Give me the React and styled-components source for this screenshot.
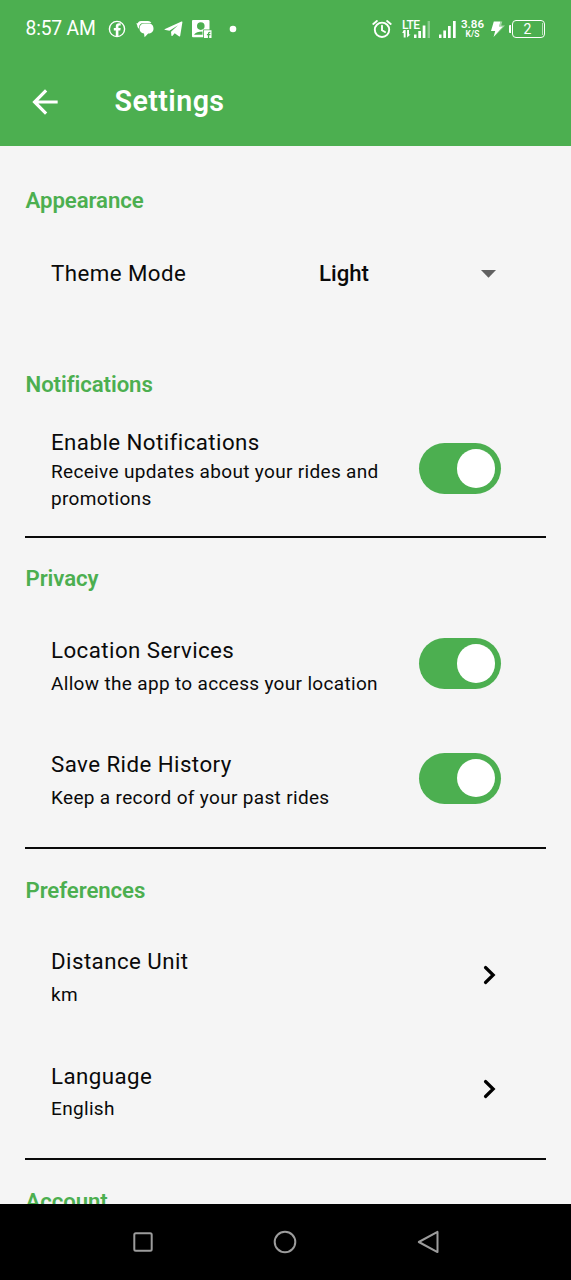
import React from "react";
import styled, { createGlobalStyle } from "styled-components";

const GREEN = "#4caf50";

const GlobalStyle = createGlobalStyle`
  * { box-sizing: border-box; }
  body { margin: 0; background: #f5f5f5; }
`;

const Screen = styled.div`
  display: flex;
  flex-direction: column;
  width: 100%;
  height: 1280px;
  overflow: hidden;
  background: #f5f5f5;
  color: #0a0a0a;
  font-family: Roboto, "Liberation Sans", sans-serif;
`;

const Header = styled.header`
  flex: none;
  height: 146px;
  background: ${GREEN};
  color: #fff;
`;

const StatusBar = styled.div`
  display: flex;
  align-items: center;
  justify-content: space-between;
  height: 57px;
  padding: 0 26px 0 25.5px;
`;

const StatusGroup = styled.div`
  display: flex;
  align-items: center;
`;

const Clock = styled.span`
  width: 82px;
  font-size: 19.3px;
  line-height: 24px;
  letter-spacing: -0.18px;
  white-space: nowrap;
  padding-top: 1px;
`;

const StatusIcon = styled.svg`
  display: block;
  flex: none;
  width: ${(p) => p.$w}px;
  height: 18px;
  margin-left: ${(p) => p.$gap || 0}px;
  fill: #fff;
`;

const Network = styled.div`
  display: flex;
  flex-direction: column;
  width: 17px;
  height: 18px;
  margin-left: 10px;
  font-size: 12px;
  font-weight: 500;
  line-height: 10px;
  letter-spacing: -0.6px;
`;

const TrafficIcon = styled.svg`
  display: block;
  width: 9px;
  height: 8px;
  fill: #fff;
`;

const Speed = styled.div`
  display: flex;
  flex-direction: column;
  align-items: center;
  width: 23px;
  margin-left: 5px;
  font-size: 11.5px;
  font-weight: 600;
  line-height: 11px;
`;

const SpeedUnit = styled.span`
  font-size: 8.5px;
  line-height: 8px;
`;

const Battery = styled.div`
  position: relative;
  display: flex;
  align-items: center;
  justify-content: center;
  width: 33px;
  height: 18px;
  margin-left: 7px;
  padding: 1px 2px 0 0;
  border: 1.5px solid #fff;
  border-radius: 4px;
  font-size: 14px;
  line-height: 16px;

  &::before {
    content: "";
    position: absolute;
    left: -4px;
    top: 4px;
    width: 2px;
    height: 8px;
    border-radius: 1px 0 0 1px;
    background: #fff;
  }

  &::after {
    content: "";
    position: absolute;
    right: 1px;
    top: 2px;
    width: 1px;
    height: 12px;
    background: rgba(255, 255, 255, 0.6);
  }
`;

const AppBar = styled.div`
  display: flex;
  align-items: center;
  height: 89px;
  padding: 0 0 0 25.5px;
`;

const BackIcon = styled.svg`
  width: 38px;
  height: 38px;
  margin-right: 51px;
  fill: #fff;
`;

const PageTitle = styled.h1`
  margin: 0 0 2px;
  font-size: 28.6px;
  font-weight: 600;
  line-height: 34px;
  letter-spacing: 0.45px;
`;

const Content = styled.main`
  flex: 1;
  min-height: 0;
  overflow: hidden;
  padding: 14px 25.5px 0 25px;
`;

const Section = styled.section`
  padding: 27.4px 0 11.8px;
  border-bottom: 2px solid ${(p) => (p.$plain ? "transparent" : "#0a0a0a")};
  margin-bottom: ${(p) => p.$after || 0}px;
`;

const SectionTitle = styled.h2`
  margin: 0 0 15.3px;
  padding-left: 0.5px;
  height: 26px;
  color: ${GREEN};
  font-size: 22.2px;
  font-weight: 600;
  line-height: 26px;
  letter-spacing: -0.07px;
`;

const Row = styled.div`
  display: flex;
  align-items: center;
  justify-content: space-between;
  height: ${(p) => p.$height || 114.4}px;
  padding: 0 44.5px 0 26px;
`;

const RowText = styled.div`
  display: flex;
  flex-direction: column;
  gap: ${(p) => p.$gap}px;
  width: 340px;
  padding-top: ${(p) => p.$shift}px;
`;

const RowTitle = styled.div`
  font-size: 22.3px;
  line-height: 30px;
  letter-spacing: 0.44px;
  white-space: nowrap;
`;

const RowSubtitle = styled.div`
  font-size: 19px;
  line-height: 27px;
  letter-spacing: 0.33px;
`;

const Track = styled.div`
  display: flex;
  align-items: center;
  justify-content: flex-end;
  flex: none;
  width: 82.5px;
  height: 51px;
  padding-right: 6px;
  border-radius: 26px;
  background: ${GREEN};
`;

const Thumb = styled.div`
  width: 38.5px;
  height: 38.5px;
  border-radius: 50%;
  background: #fff;
`;

const Select = styled.div`
  display: flex;
  align-items: center;
  justify-content: space-between;
  width: 182px;
  padding-right: 5.5px;
  font-size: 22.2px;
  font-weight: 500;
  line-height: 30px;
`;

const Caret = styled.svg`
  width: 15px;
  height: 8px;
  margin-top: 2px;
  fill: #616161;
`;

const Chevron = styled.svg`
  width: 13px;
  height: 20px;
  margin-right: 5.5px;
  fill: none;
  stroke: #000;
  stroke-width: 3.2;
  stroke-linecap: round;
`;

const NavBar = styled.nav`
  flex: none;
  display: grid;
  grid-template-columns: repeat(3, 1fr);
  place-items: center;
  height: 76.5px;
  padding: 0 71.5px;
  background: #000;
`;

const NavIcon = styled.svg`
  width: 26px;
  height: 26px;
  fill: none;
  stroke: #9c9c9c;
  stroke-width: 2;
  stroke-linejoin: round;
`;

function StatusIcons() {
  return (
    <StatusBar>
      <StatusGroup>
        <Clock>8:57 AM</Clock>
        <StatusIcon $w={18} viewBox="0 0 18 18">
          <circle cx="9" cy="9" r="7.6" fill="none" stroke="#fff" strokeWidth="1.4" />
          <path d="M7.8 16V10.5H5.8V8h2V6.600c0-2.200 1.200-3.300 3.200-3.300h1.700v2.300h-1.200c-.8 0-1.100.4-1.100 1.100V8h2.300l-.4 2.500h-1.900V16z" />
        </StatusIcon>
        <StatusIcon $w={18} $gap={10.5} viewBox="0 0 18 18">
          <path d="M5 1h7c1.500 0 2.700.8 3.400 2H7.500C4.800 3 3 4.900 3 7.400v1.300C1.800 7.800 1.300 6.800 1.200 5.200L.3 3.300h1.500C2.400 1.900 3.500 1 5 1z" />
          <path d="M8 3.500h4.700c3 0 4.800 2.100 4.800 4.900 0 3.300-2.300 5.100-5.300 5.100L8.600 17.200 8 13.500C5.300 13.300 3.500 11.200 3.500 8.500c0-3 1.800-5 4.500-5z" />
        </StatusIcon>
        <StatusIcon $w={19} $gap={9.5} viewBox="0 0 19 18">
          <path d="M.6 9.700Q0 9.300 1 8.900L17.500 1.500Q18.600 1.200 18.400 2.300L16.200 15.800Q15.900 17 14.900 16.300L10.700 13.300 8.300 15.900Q7.600 16.300 7.400 15.500L7 11.800 14 5.200 5.400 10.800z" />
        </StatusIcon>
        <StatusIcon $w={20} $gap={9.5} viewBox="0 0 20 18">
          <path fillRule="evenodd" d="M1 0h15.500q1 0 1 1v8.500h-6.300v7.800H1q-1 0-1-1V1q0-1 1-1zM8.800 2.300a3.800 3.800 0 1 0 0 7.600 3.800 3.800 0 0 0 0-7.600zM2 14.800h8.500v-3.300c-4 0-7 1-8.500 3.300z" />
          <path fillRule="evenodd" d="M12 10.300h7.500V18h-2.300v-2.700h1.200v-1.200h-1.200v-.8q0-.6 1.200-.5v-1.100q-2.500-.3-2.500 1.500v.9h-1v1.200h1V18H12z" />
        </StatusIcon>
        <StatusIcon $w={8} $gap={17} viewBox="0 0 8 18">
          <circle cx="4" cy="9" r="3.300" />
        </StatusIcon>
      </StatusGroup>
      <StatusGroup>
        <StatusIcon $w={20} viewBox="0 0 20 18">
          <g fill="none" stroke="#fff" strokeWidth="1.900" strokeLinecap="round">
            <circle cx="10" cy="9.800" r="7.200" />
            <path d="M10 5.800v4.400l3 1.800M1.300 4 4.900 1M18.700 4 15.100 1" />
          </g>
        </StatusIcon>
        <Network>
          LTE
          <TrafficIcon viewBox="0 0 9 8">
            <path d="M1.700 0h1.900v7.500H1.700V3H.2zM5.100 0H7v4.500h1.500L5.100 7.500z" />
          </TrafficIcon>
        </Network>
        <StatusIcon $w={18} $gap={-6} viewBox="0 0 18 18">
          <path d="M1 14.500h2.500V18H1zM5.300 11h2.700v7H5.300zM9.700 5.500h2.700V18H9.700z" />
          <path opacity=".35" d="M14.600 1h2.400v17h-2.400z" />
        </StatusIcon>
        <StatusIcon $w={18} $gap={7} viewBox="0 0 18 18">
          <path d="M1 14.500h2.500V18H1zM5.300 10.500h2.700V18H5.300zM10 6h2.700v12H10zM15 1h2.700v17H15z" />
        </StatusIcon>
        <Speed>
          3.86
          <SpeedUnit>K/S</SpeedUnit>
        </Speed>
        <StatusIcon $w={15} $gap={6} viewBox="0 0 15 18">
          <path d="M3.800 1.500h6.700L9 6.500h4L3.600 17 5.200 11H1z" />
          <path opacity=".5" d="M10.500 1.500h1.800L11.200 5.500H15L5 16 13 6.500H9z" />
        </StatusIcon>
        <Battery>2</Battery>
      </StatusGroup>
    </StatusBar>
  );
}

function SettingRow({ title, subtitle, height, gap = 4.8, shift = 4.2, children }) {
  return (
    <Row $height={height}>
      <RowText $gap={gap} $shift={shift}>
        <RowTitle>{title}</RowTitle>
        {subtitle && <RowSubtitle>{subtitle}</RowSubtitle>}
      </RowText>
      {children}
    </Row>
  );
}

function Switch() {
  return (
    <Track role="switch" aria-checked="true">
      <Thumb />
    </Track>
  );
}

function More() {
  return (
    <Chevron viewBox="0 0 13 20">
      <path d="M2.500 2.500 10.200 10 2.500 17.500" />
    </Chevron>
  );
}

export default function App() {
  return (
    <Screen>
      <GlobalStyle />
      <Header>
        <StatusIcons />
        <AppBar>
          <BackIcon viewBox="0 0 24 24">
            <path d="M20 11H7.830l5.590-5.590L12 4l-8 8 8 8 1.410-1.410L7.830 13H20v-2z" />
          </BackIcon>
          <PageTitle>Settings</PageTitle>
        </AppBar>
      </Header>
      <Content>
        <Section $plain $after={12.1}>
          <SectionTitle>Appearance</SectionTitle>
          <Row $height={89.400}>
            <RowTitle>Theme Mode</RowTitle>
            <Select>
              Light
              <Caret viewBox="0 0 15 8">
                <path d="M0 0h15L7.500 7.700z" />
              </Caret>
            </Select>
          </Row>
        </Section>
        <Section>
          <SectionTitle>Notifications</SectionTitle>
          <SettingRow
            title="Enable Notifications"
            subtitle="Receive updates about your rides and promotions"
            height={111.400}
            gap={1}
            shift={2}
          >
            <Switch />
          </SettingRow>
        </Section>
        <Section>
          <SectionTitle>Privacy</SectionTitle>
          <SettingRow title="Location Services" subtitle="Allow the app to access your location">
            <Switch />
          </SettingRow>
          <SettingRow title="Save Ride History" subtitle="Keep a record of your past rides">
            <Switch />
          </SettingRow>
        </Section>
        <Section>
          <SectionTitle>Preferences</SectionTitle>
          <SettingRow title="Distance Unit" subtitle="km">
            <More />
          </SettingRow>
          <SettingRow title="Language" subtitle="English">
            <More />
          </SettingRow>
        </Section>
        <Section $plain>
          <SectionTitle>Account</SectionTitle>
        </Section>
      </Content>
      <NavBar>
        <NavIcon viewBox="0 0 26 26">
          <rect x="4.300" y="4.300" width="17.400" height="17.400" rx="1.500" />
        </NavIcon>
        <NavIcon viewBox="0 0 26 26">
          <circle cx="13" cy="13" r="10.300" />
        </NavIcon>
        <NavIcon viewBox="0 0 26 26">
          <path d="M3.800 13 22.500 2.900v20.200z" />
        </NavIcon>
      </NavBar>
    </Screen>
  );
}
